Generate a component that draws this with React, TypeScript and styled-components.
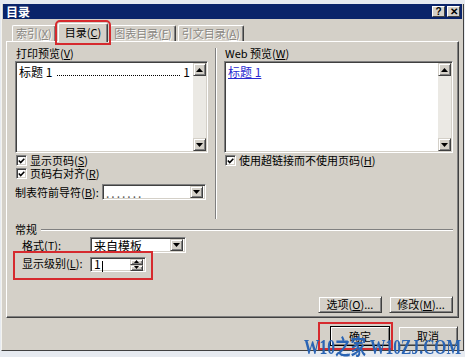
import styled, { createGlobalStyle } from 'styled-components';

const face = '#d4d0c8';
const shadow = '#808080';
const dark = '#404040';
const red = '#d62a2e';

const GlobalStyle = createGlobalStyle`
  * { box-sizing: border-box; }
  body { margin: 0; background: #fff; }
`;

const Screen = styled.div`
  position: relative;
  width: 465px;
  height: 357px;
  overflow: hidden;
  padding-top: 4px;
  background: #e6eaf0;
  font-family: 'Noto Sans CJK SC', 'Liberation Sans', sans-serif;
  font-size: 11px;
  line-height: 13px;
  color: #000;
`;

const Dialog = styled.div`
  height: 347px;
  margin: 0 1px;
  padding: 0 1px;
  display: flex;
  flex-direction: column;
  background: ${face};
  border-left: 1px solid #f4f3ef;
  border-right: 1px solid ${dark};
  border-bottom: 1px solid ${dark};
`;

const TitleBar = styled.div`
  height: 15px;
  display: flex;
  align-items: center;
  padding: 0 2px 0 3px;
  background: #0a246a;
  color: #fff;
  font-weight: 700;
  font-size: 12px;
`;

const TitleButtons = styled.div`
  margin-left: auto;
  display: flex;
  gap: 2px;
`;

const TitleButton = styled.div`
  width: 13px;
  height: 11px;
  display: flex;
  align-items: center;
  justify-content: center;
  background: ${face};
  color: #000;
  font-family: 'Liberation Sans', sans-serif;
  font-size: 10px;
  font-weight: 700;
  border: 1px solid;
  border-color: #fff ${dark} ${dark} #fff;
`;

const Body = styled.div`
  flex: 1;
  display: flex;
  flex-direction: column;
  padding: 5px 3px 0;
`;

const Tabs = styled.div`
  position: relative;
  z-index: 1;
  height: 17px;
  display: flex;
  align-items: flex-end;
  gap: 2px;
  padding-left: 6px;
`;

const Tab = styled.div<{ $active?: boolean }>`
  height: ${(p) => (p.$active ? '19px' : '16px')};
  margin-bottom: ${(p) => (p.$active ? '-1px' : '0')};
  padding: ${(p) => (p.$active ? '2px 6px 0' : '1px 3px 0')};
  position: relative;
  background: ${face};
  border-top: 1px solid #fff;
  border-left: 1px solid #fff;
  border-right: 1px solid ${dark};
  border-radius: 2px 2px 0 0;
  box-shadow: inset -1px 0 ${shadow};
  white-space: nowrap;
  color: ${(p) => (p.$active ? '#000' : '#8a8782')};
  text-shadow: ${(p) => (p.$active ? 'none' : '1px 1px #fff')};
  outline: ${(p) => (p.$active ? `2px solid ${red}` : 'none')};
  outline-offset: 1px;
  z-index: ${(p) => (p.$active ? 2 : 1)};
`;

const Panel = styled.div`
  height: 277px;
  display: flex;
  flex-direction: column;
  padding: 5px 5px 4px 8px;
  border: 1px solid;
  border-color: #fff ${dark} ${dark} #fff;
  box-shadow: inset -1px -1px ${shadow};
`;

const Columns = styled.div`
  display: grid;
  grid-template-columns: 193px 16px 1fr;
  align-items: start;
`;

const Column = styled.div`
  display: flex;
  flex-direction: column;
`;

const Label = styled.div`
  height: 14px;
  padding-left: 1px;
  white-space: nowrap;
`;

const Sunken = styled.div`
  border: 1px solid;
  border-color: ${shadow} #fff #fff ${shadow};
  box-shadow: inset 1px 1px ${dark}, inset -1px -1px ${face};
  background: #fff;
`;

const PreviewBox = styled(Sunken)`
  height: 92px;
  display: flex;
  padding: 2px;
`;

const PreviewText = styled.div`
  flex: 1;
  display: flex;
  align-items: flex-start;
  padding: 1px 3px 0 1px;
  height: 14px;
  white-space: nowrap;
  font-size: 12px;
  line-height: 13px;
`;

const Leader = styled.span`
  flex: 1;
  margin: 0 3px 2px 5px;
  align-self: flex-end;
  border-bottom: 1px dotted #000;
`;

const WebLink = styled.span`
  color: #2a2ad0;
  text-decoration: underline;
  font-size: 12px;
`;

const ScrollBar = styled.div`
  width: 13px;
  display: flex;
  flex-direction: column;
  background: #ebe9e4;
  margin: -1px -1px -1px 0;
`;

const Raised = styled.div`
  display: flex;
  align-items: center;
  justify-content: center;
  background: ${face};
  border: 1px solid;
  border-color: ${face} ${dark} ${dark} ${face};
  box-shadow: inset 1px 1px #fff, inset -1px -1px ${shadow};
`;

const ScrollButton = styled(Raised)`
  height: 13px;
`;

const Track = styled.div`
  flex: 1;
`;

const CheckRow = styled.div<{ $first?: boolean }>`
  height: 13px;
  display: flex;
  align-items: center;
  gap: 3px;
  padding-left: 1px;
  white-space: nowrap;
  margin-top: ${(p) => (p.$first ? '1px' : '0')};
`;

const Box = styled(Sunken)`
  width: 11px;
  height: 11px;
  display: flex;
  align-items: center;
  justify-content: center;
`;

const LeaderRow = styled.div`
  margin-top: 4px;
  height: 16px;
  display: flex;
  align-items: center;
`;

const LeaderLabel = styled.div`
  width: 87px;
  white-space: nowrap;
`;

const Combo = styled(Sunken)<{ $w: number }>`
  width: ${(p) => p.$w}px;
  height: 16px;
  display: flex;
  align-items: center;
  padding: 0 2px 0 3px;
`;

const ComboValue = styled.div<{ $dim?: boolean }>`
  flex: 1;
  white-space: nowrap;
  color: ${(p) => (p.$dim ? '#555' : '#000')};
  letter-spacing: ${(p) => (p.$dim ? '2px' : '0')};
  font-size: 12px;
`;

const ComboButton = styled(Raised)`
  width: 13px;
  height: 12px;
`;

const Separator = styled.div`
  width: 2px;
  height: 171px;
  margin: 1px 0 0 7px;
  border-left: 1px solid ${shadow};
  border-right: 1px solid #fff;
`;

const Group = styled.div`
  margin-top: 4px;
  display: flex;
  flex-direction: column;
`;

const GroupHeader = styled.div`
  height: 13px;
  display: flex;
  align-items: center;
  gap: 4px;
`;

const GroupLine = styled.div`
  flex: 1;
  height: 2px;
  border-top: 1px solid ${shadow};
  border-bottom: 1px solid #fff;
`;

const FieldRow = styled.div`
  margin-top: 1px;
  height: 16px;
  display: flex;
  align-items: center;
  padding-left: 7px;
`;

const FieldLabel = styled.div`
  width: 68px;
  white-space: nowrap;
`;

const Highlight = styled.div`
  width: 136px;
  height: 25px;
  display: flex;
  align-items: flex-start;
  padding: 4px 0 0 7px;
  outline: 2px solid ${red};
`;

const Spin = styled(Sunken)`
  width: 56px;
  height: 15px;
  display: flex;
  align-items: center;
  padding: 0 2px 0 3px;
`;

const Caret = styled.span`
  display: inline-block;
  width: 1px;
  height: 11px;
  margin-left: 1px;
  background: #000;
  vertical-align: middle;
`;

const SpinButtons = styled.div`
  width: 13px;
  display: flex;
  flex-direction: column;
`;

const SpinButton = styled(Raised)`
  height: 6px;
`;

const Actions = styled.div`
  margin-top: auto;
  display: flex;
  justify-content: flex-end;
  gap: 7px;
`;

const Button = styled(Raised)<{ $w: number; $h: number; $default?: boolean }>`
  width: ${(p) => p.$w}px;
  height: ${(p) => p.$h}px;
  white-space: nowrap;
  ${(p) =>
    p.$default &&
    `outline: 1px solid #000; outline-offset: -1px; border-color: ${face} #000 #000 ${face};`}
`;

const Footer = styled.div`
  display: flex;
  justify-content: flex-end;
  align-items: center;
  gap: 7px;
  padding: 6px 1px 0 0;
`;

const OkWrap = styled.div`
  display: flex;
  padding: 2px 1px 2px 10px;
  outline: 2px solid ${red};
`;

const Watermark = styled.div`
  position: absolute;
  left: 304px;
  top: 338px;
  font-family: 'Liberation Serif', 'Noto Sans CJK SC', serif;
  font-weight: 700;
  font-size: 21px;
  line-height: 19px;
  color: #2a64b4;
  white-space: nowrap;
  transform: scaleX(0.74);
  transform-origin: left top;
`;

function Arrow({ up }: { up?: boolean }) {
  return (
    <svg width="7" height="4" viewBox="0 0 7 4">
      <path d={up ? 'M3.5 0 L7 4 L0 4 Z' : 'M0 0 L7 0 L3.5 4 Z'} fill="#000" />
    </svg>
  );
}

function SmallArrow({ up }: { up?: boolean }) {
  return (
    <svg width="5" height="3" viewBox="0 0 5 3">
      <path d={up ? 'M2.5 0 L5 3 L0 3 Z' : 'M0 0 L5 0 L2.5 3 Z'} fill="#000" />
    </svg>
  );
}

function Check({ label, keyChar, first }: { label: string; keyChar: string; first?: boolean }) {
  return (
    <CheckRow $first={first}>
      <Box>
        <svg width="7" height="6" viewBox="0 0 7 6">
          <path d="M0.8 2.5 L2.7 4.5 L6.3 0.8" stroke="#000" strokeWidth="1.6" fill="none" />
        </svg>
      </Box>
      <span>
        {label}(<u>{keyChar}</u>)
      </span>
    </CheckRow>
  );
}

function Scroll() {
  return (
    <ScrollBar>
      <ScrollButton>
        <Arrow up />
      </ScrollButton>
      <Track />
      <ScrollButton>
        <Arrow />
      </ScrollButton>
    </ScrollBar>
  );
}

export default function App() {
  return (
    <Screen>
      <GlobalStyle />
      <Dialog>
        <TitleBar>
          目录
          <TitleButtons>
            <TitleButton>?</TitleButton>
            <TitleButton>✕</TitleButton>
          </TitleButtons>
        </TitleBar>
        <Body>
          <Tabs>
            <Tab>
              索引(<u>X</u>)
            </Tab>
            <Tab $active>
              目录(<u>C</u>)
            </Tab>
            <Tab>
              图表目录(<u>F</u>)
            </Tab>
            <Tab>
              引文目录(<u>A</u>)
            </Tab>
          </Tabs>
          <Panel>
            <Columns>
              <Column>
                <Label>
                  打印预览(<u>V</u>)
                </Label>
                <PreviewBox>
                  <PreviewText>
                    标题 1<Leader />1
                  </PreviewText>
                  <Scroll />
                </PreviewBox>
                <Check first label="显示页码" keyChar="S" />
                <Check label="页码右对齐" keyChar="R" />
                <LeaderRow>
                  <LeaderLabel>
                    制表符前导符(<u>B</u>):
                  </LeaderLabel>
                  <Combo $w={104}>
                    <ComboValue $dim>.......</ComboValue>
                    <ComboButton>
                      <Arrow />
                    </ComboButton>
                  </Combo>
                </LeaderRow>
              </Column>
              <Separator />
              <Column>
                <Label>
                  Web 预览(<u>W</u>)
                </Label>
                <PreviewBox>
                  <PreviewText>
                    <WebLink>标题 1</WebLink>
                  </PreviewText>
                  <Scroll />
                </PreviewBox>
                <Check first label="使用超链接而不使用页码" keyChar="H" />
              </Column>
            </Columns>
            <Group>
              <GroupHeader>
                常规
                <GroupLine />
              </GroupHeader>
              <FieldRow>
                <FieldLabel>
                  格式(<u>T</u>):
                </FieldLabel>
                <Combo $w={96}>
                  <ComboValue>来自模板</ComboValue>
                  <ComboButton>
                    <Arrow />
                  </ComboButton>
                </Combo>
              </FieldRow>
              <Highlight>
                <FieldLabel>
                  显示级别(<u>L</u>):
                </FieldLabel>
                <Spin>
                  <ComboValue>
                    1<Caret />
                  </ComboValue>
                  <SpinButtons>
                    <SpinButton>
                      <SmallArrow up />
                    </SpinButton>
                    <SpinButton>
                      <SmallArrow />
                    </SpinButton>
                  </SpinButtons>
                </Spin>
              </Highlight>
            </Group>
            <Actions>
              <Button $w={64} $h={17}>
                选项(<u>O</u>)...
              </Button>
              <Button $w={64} $h={17}>
                修改(<u>M</u>)...
              </Button>
            </Actions>
          </Panel>
          <Footer>
            <OkWrap>
              <Button $w={60} $h={20} $default>
                确定
              </Button>
            </OkWrap>
            <Button $w={60} $h={20}>
              取消
            </Button>
          </Footer>
        </Body>
      </Dialog>
      <Watermark>W10之家 W10ZJ.COM</Watermark>
    </Screen>
  );
}
